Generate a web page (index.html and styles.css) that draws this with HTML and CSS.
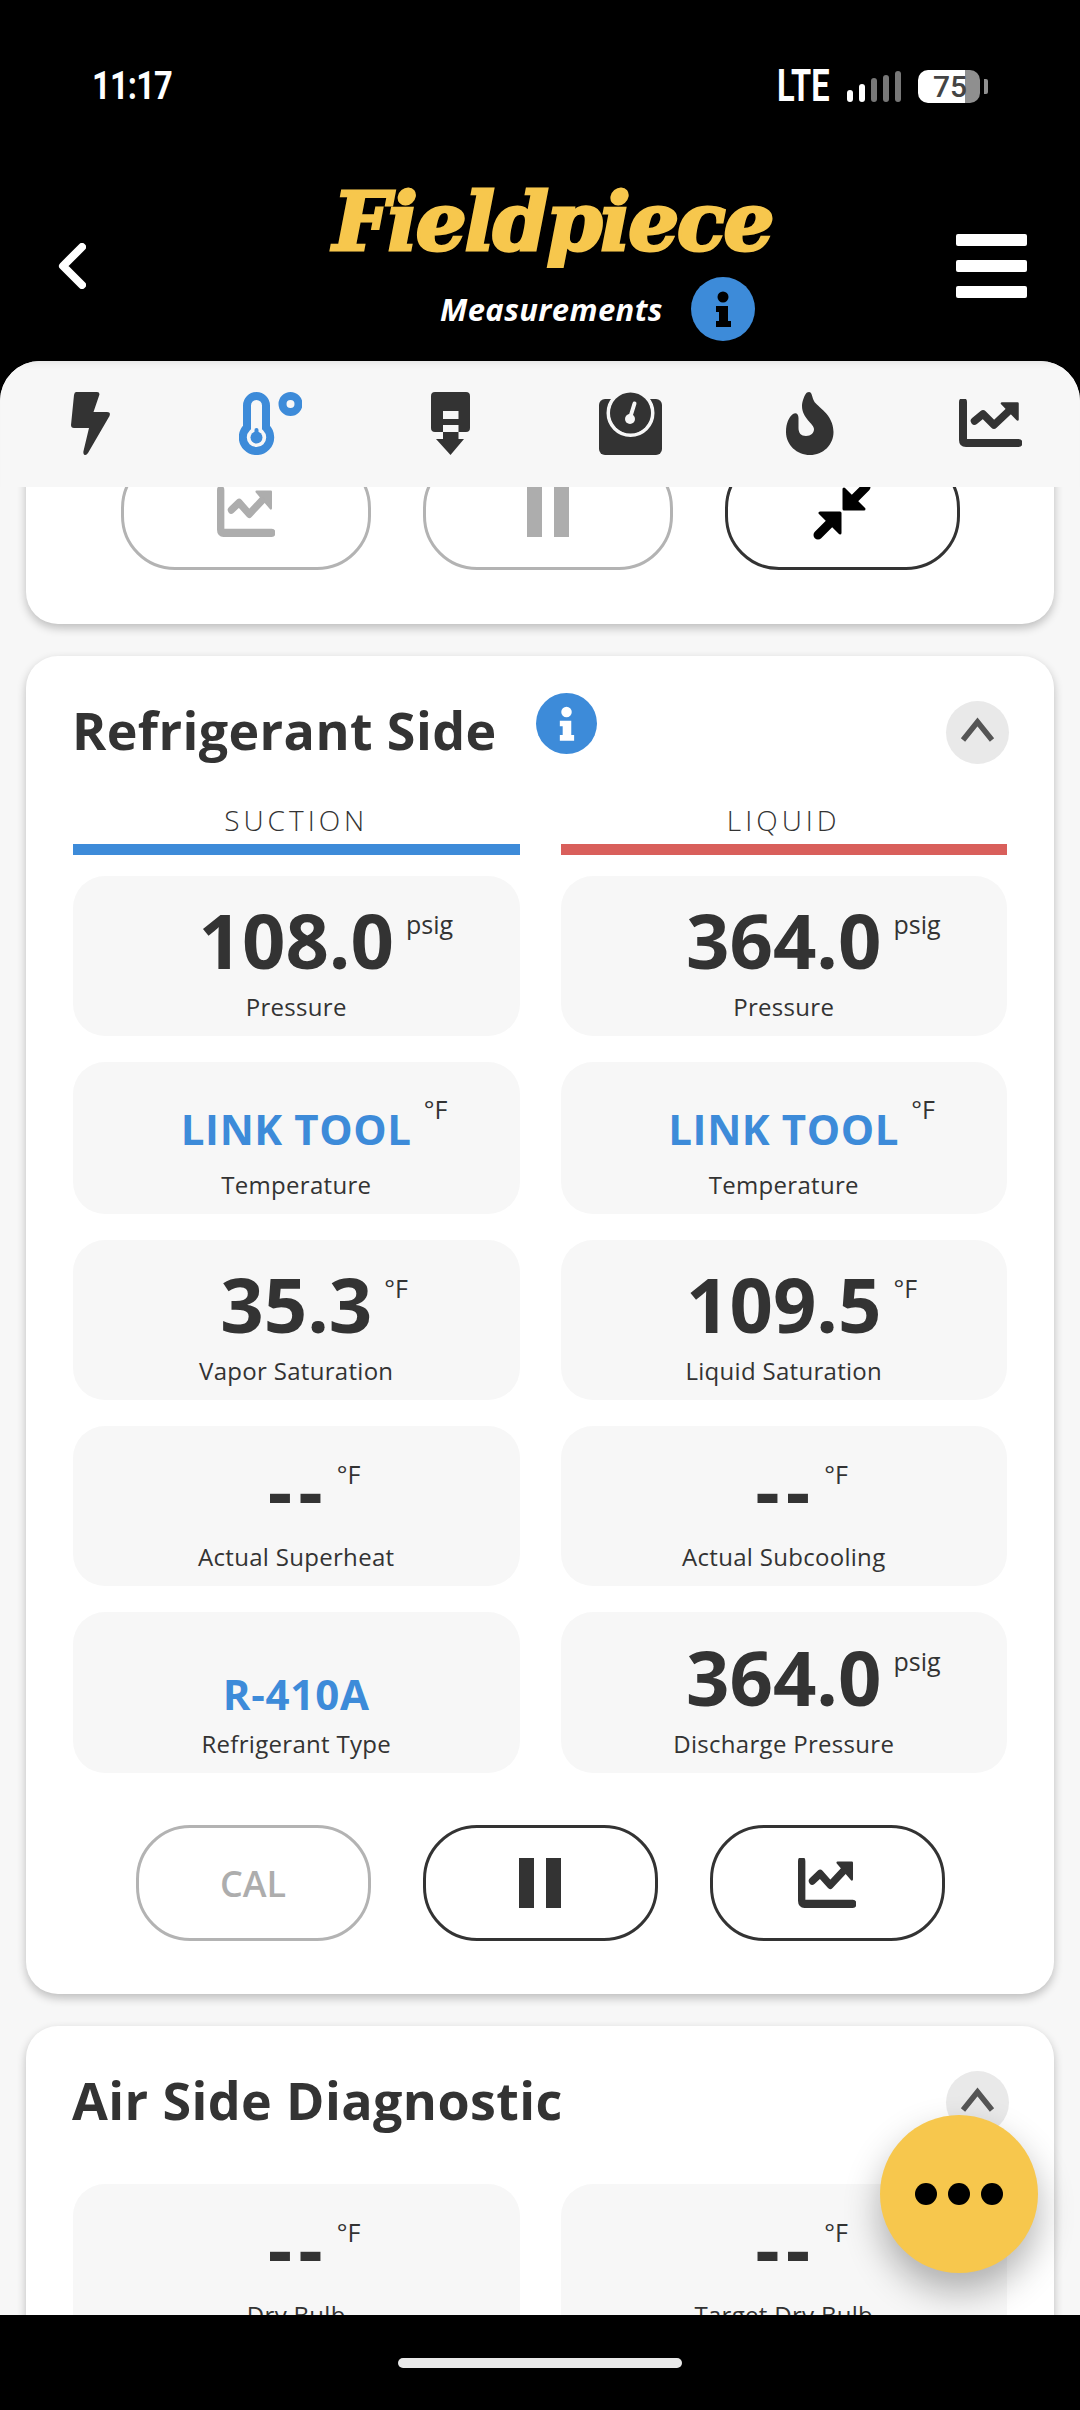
FILE: index.html
```html
<!DOCTYPE html>
<html lang="en">
<head>
<meta charset="utf-8">
<title>Fieldpiece Measurements</title>
<link rel="stylesheet" href="styles.css">
</head>
<body>
<svg class="defs" width="0" height="0" aria-hidden="true">
  <symbol id="i-info" viewBox="0 0 64 64">
    <circle cx="32" cy="32" r="32" fill="#3d8bd9"/>
    <circle cx="32" cy="20" r="5.5" fill="#000"/>
    <path d="M25 29H37V44H40V50H25V44H28V35H25Z" fill="#000"/>
  </symbol>
  <symbol id="i-info-w" viewBox="0 0 64 64">
    <circle cx="32" cy="32" r="32" fill="#3d8bd9"/>
    <circle cx="32" cy="20" r="5.5" fill="#fff"/>
    <path d="M25 29H37V44H40V50H25V44H28V35H25Z" fill="#fff"/>
  </symbol>
  <symbol id="i-chart" viewBox="0 0 63 48" preserveAspectRatio="none">
    <path d="M4 3V41Q4 44 7 44H59.500" fill="none" stroke="currentColor" stroke-width="8" stroke-linecap="round"/>
    <path d="M15.500 22L24 15L35 26L52 10" fill="none" stroke="currentColor" stroke-width="7.500" stroke-linecap="round" stroke-linejoin="round"/>
    <path d="M43 4.500H58.500V20.500Z" fill="currentColor" stroke="currentColor" stroke-width="2.500" stroke-linejoin="round"/>
  </symbol>
  <symbol id="i-chev" viewBox="0 0 63 63">
    <path d="M17 39L31.500 21L46 39" fill="none" stroke="#555" stroke-width="5.500"/>
  </symbol>
</svg>

<div class="phone">
  <div class="status">
    <span class="time">11:17</span>
    <div class="status-right">
      <span class="lte">LTE</span>
      <div class="signal">
        <i class="sig s1"></i><i class="sig s2"></i><i class="sig s3 off"></i><i class="sig s4 off"></i><i class="sig s5 off"></i>
      </div>
      <div class="battery"><span class="batt-body">75</span><i class="batt-nub"></i></div>
    </div>
  </div>

  <header class="appbar">
    <svg class="back" viewBox="0 0 28 46"><path d="M24 4L5 23L24 42" fill="none" stroke="#fff" stroke-width="8" stroke-linecap="round" stroke-linejoin="round"/></svg>
    <div class="brand">
      <div class="logo">Fieldpiece</div>
      <div class="sub">
        <span class="sub-text">Measurements</span>
        <svg class="info-lg"><use href="#i-info"/></svg>
      </div>
    </div>
    <div class="menu"><i></i><i></i><i></i></div>
  </header>

  <main class="panel">
    <nav class="tabs">
      <div class="tab">
        <svg class="ic-bolt" viewBox="0 0 39 63"><path d="M5 0H26Q29 0 28.300 3L22.500 20H36Q40 20 38.500 24L17 61Q15 64 13 62.500Q12 61 12.500 59L18 36H3Q0 36 0 33L3 3Q3.500 0 5 0Z" fill="#333"/></svg>
      </div>
      <div class="tab">
        <svg class="ic-thermo" viewBox="0 0 63 63">
          <path d="M8 35.500V13.500a9.500 9.500 0 0 1 19 0V35.500a13.700 13.700 0 1 1 -19 0Z" fill="none" stroke="#3d8bd9" stroke-width="8"/>
          <circle cx="17.500" cy="45.500" r="6" fill="#3d8bd9"/>
          <rect x="15.500" y="36" width="4" height="9" rx="2" fill="#3d8bd9"/>
          <circle cx="51.500" cy="12" r="8" fill="none" stroke="#3d8bd9" stroke-width="8"/>
        </svg>
      </div>
      <div class="tab">
        <svg class="ic-drip" viewBox="0 0 39 63"><path fill-rule="evenodd" d="M4 0H35Q39 0 39 4V36Q39 40 35 40H27.500V33H12V40H4Q0 40 0 36V4Q0 0 4 0ZM12 19V27H27.500V19ZM12 40H27.500V47H33L19.500 63L5 47H12Z" fill="#333"/></svg>
      </div>
      <div class="tab">
        <svg class="ic-scale" viewBox="0 0 63 63">
          <rect y="7" width="63" height="56" rx="6" fill="#333"/>
          <circle cx="31.500" cy="21" r="22" fill="#333" stroke="#f7f7f7" stroke-width="4"/>
          <path d="M0 0H63V7H0Z" fill="#f7f7f7"/>
          <circle cx="31.500" cy="21" r="20.500" fill="#333"/>
          <path d="M31 26L35.500 11.500" stroke="#f7f7f7" stroke-width="4" stroke-linecap="round"/>
          <circle cx="31" cy="27" r="5" fill="#f7f7f7"/>
        </svg>
      </div>
      <div class="tab">
        <svg class="ic-flame" viewBox="0 0 48 63"><path d="M23 0C26 0 26 5 28 9C31 15 47.500 22 47.500 40C47.500 53 37 63 24 63C11 63 0 53 0 40C0 31 3 25 7 22C10 20 12.500 22 12.500 26V36C12.500 41 15 44 20 44C25 44 28 41 28 37C28 32 16 26 16 14C16 9 19 2 21 .5Z" fill="#333"/></svg>
      </div>
      <div class="tab">
        <svg class="ic-chart-tab"><use href="#i-chart"/></svg>
      </div>
    </nav>

    <div class="scroll">
      <section class="card card-clipped">
        <div class="btn-row">
          <button class="btn btn-wide off"><svg class="btn-chart"><use href="#i-chart"/></svg></button>
          <button class="btn btn-wide off"><span class="pause"><i></i><i></i></span></button>
          <button class="btn">
            <svg class="ic-compress" viewBox="0 0 58 56">
              <path d="M7 29H27V49ZM31 5V25H51Z" fill="#000" stroke="#000" stroke-width="3" stroke-linejoin="round"/>
              <path d="M17 39L5 51M41 15L53 3" stroke="#000" stroke-width="9" stroke-linecap="round"/>
            </svg>
          </button>
        </div>
      </section>

      <section class="card">
        <div class="card-head">
          <h2 class="title">Refrigerant Side</h2>
          <svg class="info-sm"><use href="#i-info-w"/></svg>
          <svg class="chev"><use href="#i-chev"/></svg>
        </div>
        <div class="cols">
          <div class="col-head col-suction">SUCTION</div>
          <div class="col-head col-liquid">LIQUID</div>
        </div>
        <div class="tiles tiles-main">
          <div class="tile"><div class="value num"><span class="v">108.0<sup class="unit">psig</sup></span></div><div class="label">Pressure</div></div>
          <div class="tile"><div class="value num"><span class="v">364.0<sup class="unit">psig</sup></span></div><div class="label">Pressure</div></div>
          <div class="tile"><div class="value link"><span class="v">LINK TOOL<sup class="unit">°F</sup></span></div><div class="label">Temperature</div></div>
          <div class="tile"><div class="value link"><span class="v">LINK TOOL<sup class="unit">°F</sup></span></div><div class="label">Temperature</div></div>
          <div class="tile"><div class="value num"><span class="v">35.3<sup class="unit">°F</sup></span></div><div class="label">Vapor Saturation</div></div>
          <div class="tile"><div class="value num"><span class="v">109.5<sup class="unit">°F</sup></span></div><div class="label">Liquid Saturation</div></div>
          <div class="tile"><div class="value num dash"><span class="v">--<sup class="unit">°F</sup></span></div><div class="label">Actual Superheat</div></div>
          <div class="tile"><div class="value num dash"><span class="v">--<sup class="unit">°F</sup></span></div><div class="label">Actual Subcooling</div></div>
          <div class="tile"><div class="value ref"><span class="v">R-410A</span></div><div class="label">Refrigerant Type</div></div>
          <div class="tile"><div class="value num"><span class="v">364.0<sup class="unit">psig</sup></span></div><div class="label">Discharge Pressure</div></div>
        </div>
        <div class="btn-row btn-row-main">
          <button class="btn off btn-cal">CAL</button>
          <button class="btn"><span class="pause"><i></i><i></i></span></button>
          <button class="btn"><svg class="btn-chart"><use href="#i-chart"/></svg></button>
        </div>
      </section>

      <section class="card">
        <div class="card-head">
          <h2 class="title">Air Side Diagnostic</h2>
          <svg class="chev"><use href="#i-chev"/></svg>
        </div>
        <div class="tiles tiles-air">
          <div class="tile"><div class="value num dash"><span class="v">--<sup class="unit">°F</sup></span></div><div class="label">Dry Bulb</div></div>
          <div class="tile"><div class="value num dash"><span class="v">--<sup class="unit">°F</sup></span></div><div class="label">Target Dry Bulb</div></div>
        </div>
      </section>
    </div>
  </main>

  <div class="home"><i class="home-pill"></i></div>
  <button class="fab"><i></i><i></i><i></i></button>
</div>
</body>
</html>
```

FILE: styles.css
```css
* { box-sizing: border-box; }
html, body { margin: 0; padding: 0; background: #000; }
body { font-family: "Open Sans", "Liberation Sans", sans-serif; color: #333; }
.defs { position: absolute; }
i { display: block; }

.phone { position: relative; width: 1080px; height: 2410px; display: flex; flex-direction: column; overflow: hidden; background: #000; }

/* status bar */
.status { height: 171px; flex: none; padding: 64px 92px 0 92px; display: flex; justify-content: space-between; align-items: flex-start; color: #fff; }
.time { font: 700 38px/44px Roboto, sans-serif; letter-spacing: -1px; display: block; width: 78px; white-space: nowrap; transform: scaleX(.86); transform-origin: left center; }
.status-right { display: flex; align-items: center; height: 44px; }
.lte { font: 700 44px/44px Roboto, sans-serif; width: 54px; display: block; transform: scaleX(.74); transform-origin: left center; white-space: nowrap; }
.signal { display: flex; align-items: flex-end; gap: 6px; height: 31px; margin-left: 16px; }
.sig { width: 6px; border-radius: 3px; background: #fff; }
.sig.off { background: #777; }
.s1 { height: 12px; } .s2 { height: 18px; } .s3 { height: 24px; } .s4 { height: 27px; } .s5 { height: 31px; }
.battery { display: flex; align-items: center; margin-left: 17px; }
.batt-body { width: 62px; height: 33px; border-radius: 10px; background: linear-gradient(90deg, #fff 47px, #8f8f8f 47px); color: #444; font: 500 30px/33px Roboto, sans-serif; padding-left: 15px; }
.batt-nub { width: 4px; height: 15px; margin-left: 4px; border-radius: 0 2px 2px 0; background: #8f8f8f; }

/* app bar */
.appbar { height: 190px; flex: none; display: flex; align-items: center; padding: 0 53px 0 58px; }
.back { width: 28px; height: 46px; flex: none; }
.brand { margin-left: 247px; align-self: flex-start; width: 439px; }
.logo { color: #f7c74d; font: italic 700 80px/88px "DejaVu Serif", serif; -webkit-text-stroke: 3px #f7c74d; white-space: nowrap; letter-spacing: -2.2px; padding-top: 7px; height: 88px; }
.sub { display: flex; align-items: center; padding-left: 107px; height: 64px; margin-top: 18px; }
.sub-text { font: italic 700 31px/42px "Open Sans", sans-serif; color: #fff; white-space: nowrap; letter-spacing: .4px; }
.info-lg { width: 64px; height: 64px; margin-left: 28px; flex: none; }
.menu { margin-left: auto; width: 71px; display: flex; flex-direction: column; gap: 14px; }
.menu i { height: 12px; border-radius: 2px; background: #fff; }

/* panel */
.panel { flex: 1; min-height: 0; display: flex; flex-direction: column; background: #f7f7f7; border-radius: 40px 40px 0 0; overflow: hidden; }
.tabs { flex: none; height: 126px; display: grid; grid-template-columns: repeat(6, 180px); padding-top: 31px; box-shadow: inset 0 7px 7px -5px rgba(0,0,0,.08); position: relative; z-index: 2; background: #f7f7f7; }
.tab { display: flex; justify-content: center; align-items: flex-start; }
.ic-bolt { width: 39px; height: 63px; }
.ic-thermo { width: 63px; height: 63px; }
.ic-drip { width: 39px; height: 63px; }
.ic-scale { width: 63px; height: 63px; }
.ic-flame { width: 48px; height: 63px; }
.ic-chart-tab { width: 63px; height: 48px; margin-top: 7px; color: #333; }

.scroll { flex: 1; min-height: 0; overflow: hidden; padding: 0 26px; }
.card { background: #fff; border-radius: 32px; box-shadow: 0 4px 10px rgba(0,0,0,.24); padding: 45px 47px 53px; margin-bottom: 32px; }
.card-clipped { margin-top: -53px; padding: 20px 0 54px; }

.card-head { display: flex; align-items: flex-start; height: 63px; }
.title { margin: -3px 0 0 -1px; font: 700 52px/63px "Open Sans", sans-serif; color: #333; white-space: nowrap; letter-spacing: .4px; }
.info-sm { width: 61px; height: 61px; margin: -8px 0 0 39px; flex: none; }
.chev { width: 63px; height: 63px; margin: 0 -2px 0 auto; flex: none; border-radius: 50%; background: #e9e9e9; }

.cols { display: grid; grid-template-columns: 1fr 1fr; column-gap: 41px; margin-top: 37px; }
.col-head { font: 300 28px/38px "Open Sans", sans-serif; letter-spacing: 4px; text-align: center; padding-bottom: 5px; border-bottom: 11px solid #3d8bd9; color: #333; }
.col-liquid { border-bottom-color: #d95f5b; }

.tiles { display: grid; grid-template-columns: 1fr 1fr; column-gap: 41px; row-gap: 26px; }
.tiles-main { margin-top: 21px; grid-template-rows: 160px 152px 160px 160px 161px; }
.tiles-air { margin-top: 50px; grid-template-rows: 160px; }
.tile { background: #f7f7f7; border-radius: 32px; display: flex; flex-direction: column; justify-content: flex-end; align-items: center; padding-bottom: 13px; }
.value { text-align: center; white-space: nowrap; }
.v { position: relative; display: inline-block; }
.num { font: 700 76px/103px "Open Sans", sans-serif; color: #333; }
.dash .v { letter-spacing: 6px; margin-right: -4px; }
.dash .unit { margin-left: 8px; }
.link { font: 700 42px/80px "Open Sans", sans-serif; color: #3d8bd9; letter-spacing: .6px; }
.ref { font: 700 42px/68px "Open Sans", sans-serif; color: #3d8bd9; letter-spacing: .8px; }
.unit { position: absolute; left: 100%; margin-left: 12px; font: 400 25px/24px "Open Sans", sans-serif; color: #333; letter-spacing: 0; vertical-align: baseline; }
.num .unit { top: 24px; }
.link .unit { top: 8px; }
.label { font: 500 24px/32px "Open Sans", sans-serif; color: #333; white-space: nowrap; letter-spacing: .3px; }

.btn-row { display: flex; justify-content: center; gap: 52px; }
.btn-row-main { margin-top: 52px; }
.btn { width: 235px; height: 116px; padding: 0; background: #fff; border: 3px solid #333; border-radius: 54px; display: flex; align-items: center; justify-content: center; color: #333; font-family: inherit; }
.btn.off { border-color: #b3b3b3; color: #adadad; }
.btn-wide { width: 250px; }
.btn-cal { font-size: 36px; font-weight: 600; }
.pause { display: flex; gap: 12px; }
.pause i { width: 15px; height: 50px; background: currentColor; }
.btn-chart { width: 58px; height: 50px; }
.ic-compress { width: 58px; height: 56px; }

/* home indicator */
.home { flex: none; height: 95px; background: #000; display: flex; justify-content: center; padding-top: 43px; position: relative; z-index: 3; }
.home-pill { width: 284px; height: 10px; border-radius: 5px; background: #e9e9e9; }

/* floating action button */
.fab { position: absolute; left: 880px; top: 2115px; z-index: 2; width: 158px; height: 158px; border: 0; border-radius: 50%; background: #f7c74d; box-shadow: 0 18px 36px rgba(0,0,0,.3); display: flex; align-items: center; justify-content: center; gap: 11px; padding: 0; }
.fab i { width: 22px; height: 22px; border-radius: 50%; background: #000; }
```
